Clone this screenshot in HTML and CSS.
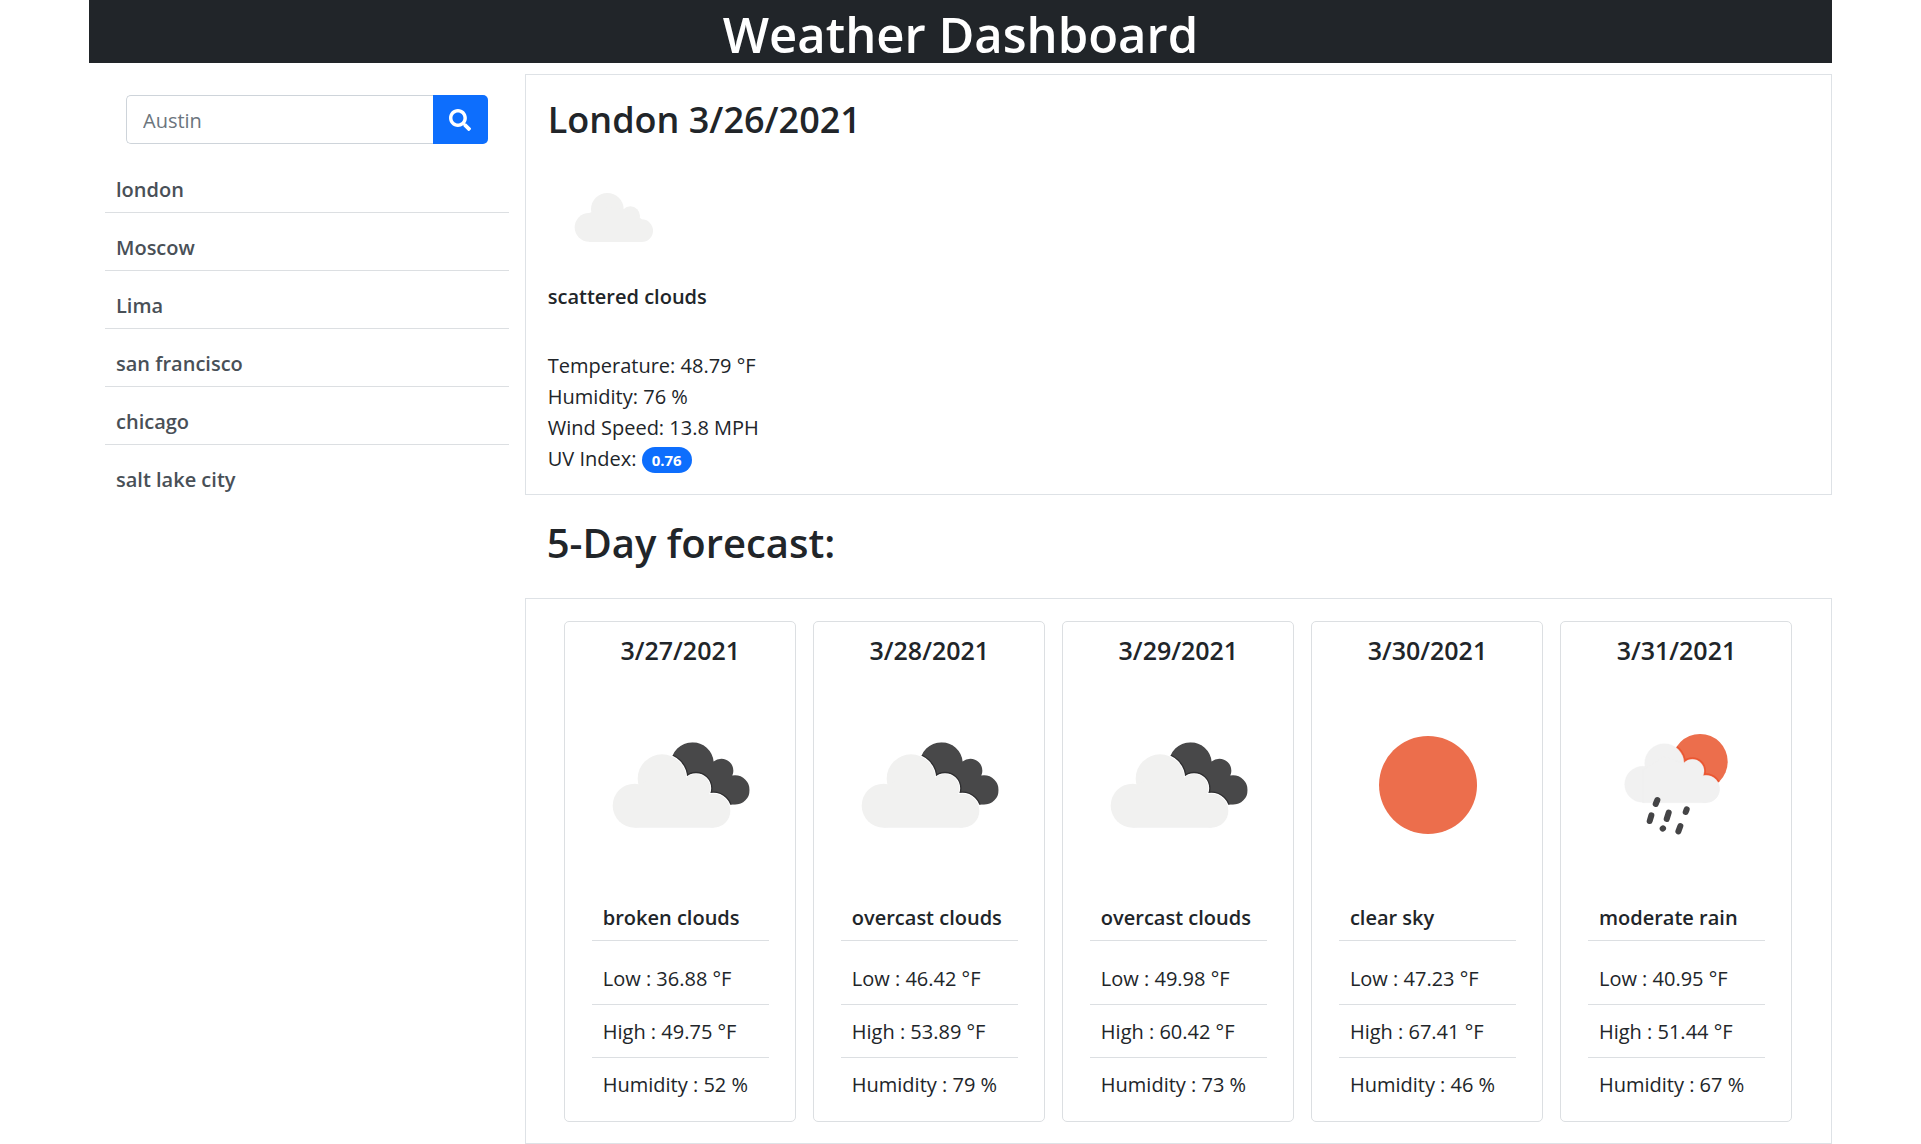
FILE: index.html
```
<!DOCTYPE html>
<html lang="en">
<head>
<meta charset="utf-8">
<meta name="viewport" content="width=device-width, initial-scale=1">
<title>Weather Dashboard</title>
<link rel="stylesheet" href="styles.css">
</head>
<body>
<svg class="sprite" aria-hidden="true">
  <defs>
    <g id="cloud">
      <circle cx="186" cy="176" r="73"/><circle cx="104" cy="257" r="66"/><circle cx="288" cy="205" r="43"/><circle cx="340" cy="272" r="51"/>
      <path d="M104 200L186 160L288 190L340 240V323H104Z"/>
    </g>
    <clipPath id="dark-shape">
      <circle cx="277" cy="131" r="64"/><circle cx="364" cy="152" r="36"/><circle cx="405" cy="210" r="44"/>
      <path d="M277 100L340 125L390 160L405 254H300Z"/>
    </clipPath>
    <clipPath id="sun-shape"><circle cx="300" cy="125" r="83"/></clipPath>
    <symbol id="broken-clouds" viewBox="-24 -69 531 531">
      <g clip-path="url(#dark-shape)">
        <rect width="510" height="360" fill="#484849"/>
        <use href="#cloud" fill="none" stroke="#2e2e30" stroke-width="13"/>
      </g>
      <use href="#cloud" fill="#fff" stroke="#fff" stroke-width="5"/>
      <use href="#cloud" fill="#f1f1f0"/>
    </symbol>
    <symbol id="clear-sky" viewBox="0 0 177 177">
      <circle cx="89" cy="88" r="49" fill="#ec6e4c"/>
    </symbol>
    <g id="rain-cloud">
      <circle cx="193" cy="130" r="59"/><circle cx="128" cy="193" r="54"/><circle cx="277" cy="153" r="35"/><circle cx="318" cy="207" r="41"/>
      <path d="M128 150L193 110L277 140L318 180V248H128Z"/>
    </g>
    <symbol id="rain" viewBox="-36 -69 531 531">
      <g clip-path="url(#sun-shape)">
        <rect width="450" height="390" fill="#ec6e4c"/>
        <use href="#rain-cloud" fill="none" stroke="#eb5732" stroke-width="12"/>
      </g>
      <use href="#rain-cloud" fill="#f1f1f1" stroke="#f1f1f1" stroke-width="1"/>
      <path d="M172 240L167 252M154 286L149 303M206 278L200 297M260 268L257 276M189 325L188 326M241 318L235 334" stroke="#444446" stroke-width="18" stroke-linecap="round"/>
    </symbol>
    <symbol id="scattered-clouds" viewBox="-36 -75 375 375">
      <g fill="#f1f1f0">
        <circle cx="142" cy="88" r="49"/><circle cx="87" cy="142" r="43"/><circle cx="211" cy="108" r="29"/><circle cx="245" cy="152" r="34"/>
        <path d="M87 99L142 80L211 90L245 118V186H87Z"/>
      </g>
    </symbol>
  </defs>
</svg>

<div class="container">
  <header class="header"><h1>Weather Dashboard</h1></header>
  <div class="layout">
    <aside class="sidebar">
      <form class="search">
        <input type="text" placeholder="Austin" aria-label="City">
        <button type="button" aria-label="Search">
          <svg viewBox="0 0 512 512" fill="currentColor" aria-hidden="true"><path d="M505 442.7L405.3 343c-4.500-4.500-10.600-7-17-7H372c27.600-35.300 44-79.700 44-128C416 93.100 322.900 0 208 0S0 93.100 0 208s93.100 208 208 208c48.300 0 92.700-16.400 128-44v16.300c0 6.400 2.500 12.500 7 17l99.700 99.700c9.400 9.400 24.600 9.400 33.900 0l28.300-28.300c9.400-9.400 9.400-24.600.1-34zM208 336c-70.700 0-128-57.200-128-128 0-70.700 57.200-128 128-128 70.700 0 128 57.200 128 128 0 70.700-57.200 128-128 128z"/></svg>
        </button>
      </form>
      <ul class="cities">
        <li><button type="button">london</button></li>
        <li><button type="button">Moscow</button></li>
        <li><button type="button">Lima</button></li>
        <li><button type="button">san francisco</button></li>
        <li><button type="button">chicago</button></li>
        <li><button type="button">salt lake city</button></li>
      </ul>
    </aside>
    <main class="main">
      <section class="current">
        <h2>London 3/26/2021</h2>
        <svg class="current-icon" aria-hidden="true"><use href="#scattered-clouds"/></svg>
        <h3>scattered clouds</h3>
        <ul class="readings">
          <li>Temperature: 48.79 °F</li>
          <li>Humidity: 76 %</li>
          <li>Wind Speed: 13.8 MPH</li>
          <li>UV Index: <span class="badge">0.76</span></li>
        </ul>
      </section>
      <h2 class="forecast-title">5-Day forecast:</h2>
      <section class="forecast">
        <article class="card">
          <h3>3/27/2021</h3>
          <svg class="card-icon" aria-hidden="true"><use href="#broken-clouds"/></svg>
          <h4>broken clouds</h4>
          <ul><li>Low : 36.88 °F</li><li>High : 49.75 °F</li><li>Humidity : 52 %</li></ul>
        </article>
        <article class="card">
          <h3>3/28/2021</h3>
          <svg class="card-icon" aria-hidden="true"><use href="#broken-clouds"/></svg>
          <h4>overcast clouds</h4>
          <ul><li>Low : 46.42 °F</li><li>High : 53.89 °F</li><li>Humidity : 79 %</li></ul>
        </article>
        <article class="card">
          <h3>3/29/2021</h3>
          <svg class="card-icon" aria-hidden="true"><use href="#broken-clouds"/></svg>
          <h4>overcast clouds</h4>
          <ul><li>Low : 49.98 °F</li><li>High : 60.42 °F</li><li>Humidity : 73 %</li></ul>
        </article>
        <article class="card">
          <h3>3/30/2021</h3>
          <svg class="card-icon" aria-hidden="true"><use href="#clear-sky"/></svg>
          <h4>clear sky</h4>
          <ul><li>Low : 47.23 °F</li><li>High : 67.41 °F</li><li>Humidity : 46 %</li></ul>
        </article>
        <article class="card">
          <h3>3/31/2021</h3>
          <svg class="card-icon" aria-hidden="true"><use href="#rain"/></svg>
          <h4>moderate rain</h4>
          <ul><li>Low : 40.95 °F</li><li>High : 51.44 °F</li><li>Humidity : 67 %</li></ul>
        </article>
      </section>
    </main>
  </div>
</div>
</body>
</html>
```
FILE: styles.css
```
* { box-sizing: border-box; }
body {
  margin: 0;
  background: #fff;
  color: #212529;
  font: 20px/31px "Open Sans", "Noto Sans", sans-serif;
}
h1, h2, h3, h4, ul { margin: 0; padding: 0; font-weight: 600; }
ul { list-style: none; font-weight: 400; }
.sprite { position: absolute; width: 0; height: 0; }
.container { padding: 0 89px; }
.header { padding-top: 5px; background: #212529; color: #fff; text-align: center; }
.header h1 { font-size: 49px; line-height: 58px; }
.layout { display: grid; grid-template-columns: 1fr 3fr; padding-top: 11px; }
.sidebar { padding: 21px 16px; min-width: 0; }
.search { display: flex; height: 49px; margin: 0 21px 11px; }
.search input {
  flex: 1;
  min-width: 0;
  padding: 2px 16px 0;
  border: 1px solid #ced4da;
  border-right: 0;
  border-radius: 5px 0 0 5px;
  font: inherit;
  color: #212529;
}
.search input::placeholder { color: #6c757d; opacity: 1; }
.search button {
  display: grid;
  place-items: center;
  width: 55px;
  padding: 0;
  border: 0;
  border-radius: 0 5px 5px 0;
  background: #0d6efd;
  color: #fff;
}
.search svg { width: 22px; height: 22px; }
.cities li { border-bottom: 1px solid #dcdfe2; }
.cities li:last-child { border-bottom: 0; }
.cities button {
  display: block;
  width: 100%;
  padding: 19px 11px 7px;
  border: 0;
  background: none;
  color: #495057;
  font: inherit;
  font-weight: 600;
  text-align: left;
}
.current { padding: 22px 22px 20px; border: 1px solid #dee2e6; }
.current h2 { font-size: 36px; line-height: 46px; }
.current-icon { display: block; width: 125px; height: 125px; margin: 12px 0 1px; }
.current h3 { font-size: 20px; line-height: 31px; margin-bottom: 38px; }
.badge {
  display: inline-block;
  padding: 5px 10px;
  border-radius: 13px;
  background: #0d6efd;
  color: #fff;
  font-size: 15px;
  font-weight: 700;
  line-height: 16px;
}
.forecast-title { padding: 23px 22px 30px; font-size: 40px; line-height: 50px; }
.forecast {
  display: grid;
  grid-template-columns: repeat(5, 1fr);
  gap: 17px;
  padding: 22px 39px 21px 38px;
  border: 1px solid #dee2e6;
}
.card { padding: 13px 26px 21px 27px; border: 1px solid #dcdfe2; border-radius: 5px; }
.card h3 { font-size: 25px; line-height: 30px; text-align: center; }
.card-icon { display: block; width: 100%; height: 177px; margin: 32px 0 29px; }
.card h4 { padding: 0 11px 7px; border-bottom: 1px solid #dcdfe2; font-size: 20px; line-height: 30px; white-space: nowrap; }
.card ul { padding-top: 11px; line-height: 30px; }
.card li { padding: 12px 11px 10px; border-bottom: 1px solid #dcdfe2; white-space: nowrap; }
.card li:last-child { padding-bottom: 0; border-bottom: 0; }
```
